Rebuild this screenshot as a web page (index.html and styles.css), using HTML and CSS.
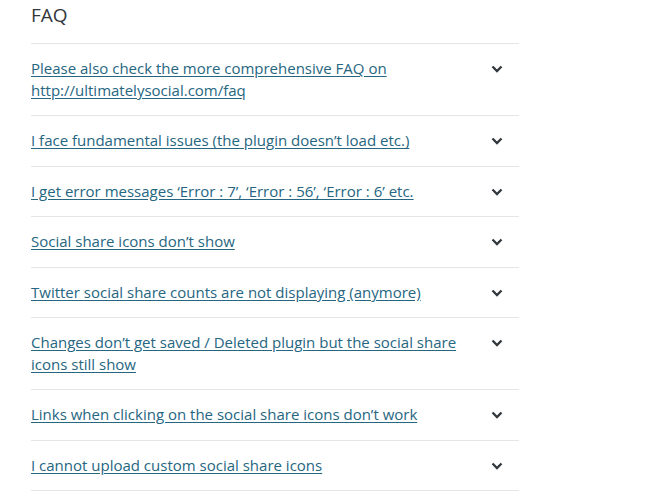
FILE: index.html
```html
<!DOCTYPE html>
<html lang="en">
<head>
<meta charset="utf-8">
<title>FAQ</title>
<link rel="stylesheet" href="styles.css">
</head>
<body>
<section class="faq">
  <h2 class="faq-title">FAQ</h2>
  <dl class="faq-list">
    <dt class="faq-item"><a class="faq-q" href="#">Please also check the more comprehensive FAQ on http://ultimatelysocial.com/faq</a><span class="chev"><svg viewBox="0 0 12 8" width="12" height="8"><path d="M1.5 1.5 L6 6 L10.5 1.5" fill="none" stroke="#32373c" stroke-width="2.3"/></svg></span></dt>
    <dt class="faq-item"><a class="faq-q" href="#">I face fundamental issues (the plugin doesn’t load etc.)</a><span class="chev"><svg viewBox="0 0 12 8" width="12" height="8"><path d="M1.5 1.5 L6 6 L10.5 1.5" fill="none" stroke="#32373c" stroke-width="2.3"/></svg></span></dt>
    <dt class="faq-item"><a class="faq-q" href="#">I get error messages ‘Error : 7’, ‘Error : 56’, ‘Error : 6’ etc.</a><span class="chev"><svg viewBox="0 0 12 8" width="12" height="8"><path d="M1.5 1.5 L6 6 L10.5 1.5" fill="none" stroke="#32373c" stroke-width="2.3"/></svg></span></dt>
    <dt class="faq-item"><a class="faq-q" href="#">Social share icons don’t show</a><span class="chev"><svg viewBox="0 0 12 8" width="12" height="8"><path d="M1.5 1.5 L6 6 L10.5 1.5" fill="none" stroke="#32373c" stroke-width="2.3"/></svg></span></dt>
    <dt class="faq-item"><a class="faq-q" href="#">Twitter social share counts are not displaying (anymore)</a><span class="chev"><svg viewBox="0 0 12 8" width="12" height="8"><path d="M1.5 1.5 L6 6 L10.5 1.5" fill="none" stroke="#32373c" stroke-width="2.3"/></svg></span></dt>
    <dt class="faq-item"><a class="faq-q" href="#">Changes don’t get saved / Deleted plugin but the social share icons still show</a><span class="chev"><svg viewBox="0 0 12 8" width="12" height="8"><path d="M1.5 1.5 L6 6 L10.5 1.5" fill="none" stroke="#32373c" stroke-width="2.3"/></svg></span></dt>
    <dt class="faq-item"><a class="faq-q" href="#">Links when clicking on the social share icons don’t work</a><span class="chev"><svg viewBox="0 0 12 8" width="12" height="8"><path d="M1.5 1.5 L6 6 L10.5 1.5" fill="none" stroke="#32373c" stroke-width="2.3"/></svg></span></dt>
    <dt class="faq-item"><a class="faq-q" href="#">I cannot upload custom social share icons</a><span class="chev"><svg viewBox="0 0 12 8" width="12" height="8"><path d="M1.5 1.5 L6 6 L10.5 1.5" fill="none" stroke="#32373c" stroke-width="2.3"/></svg></span></dt>
  </dl>
</section>
</body>
</html>
```
FILE: styles.css
```css
html, body {
  margin: 0;
  padding: 0;
  background: #ffffff;
}
body {
  font-family: "Open Sans", "Noto Sans", sans-serif;
  color: #32373c;
}
.faq {
  width: 488px;
  padding-left: 31px;
}
.faq-title {
  margin: 0;
  padding: 2px 0 0;
  font-size: 19px;
  line-height: 26px;
  font-weight: 400;
  color: #32373c;
  border-bottom: 1px solid #e5e5e5;
  box-sizing: border-box;
  height: 44px;
}
.faq-list {
  margin: 0;
  padding: 0;
}
.faq-item {
  display: flex;
  justify-content: space-between;
  align-items: flex-start;
  padding: 14px 0;
  font-size: 15px;
  line-height: 21.5px;
  border-bottom: 1px solid #e5e5e5;
}
.faq-q {
  max-width: 440px;
  font-size: 15px;
  line-height: 21.5px;
  color: #266681;
  text-decoration: underline;
  text-underline-offset: 2px;
}
.chev {
  display: flex;
  width: 12px;
  height: 21px;
  align-items: flex-start;
  padding-top: 7px;
  margin-right: 16px;
  box-sizing: border-box;
}
```
